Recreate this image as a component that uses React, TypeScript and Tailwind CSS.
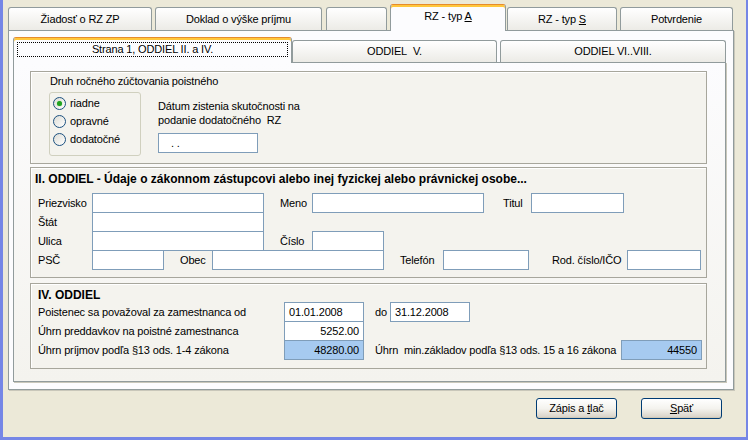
import React from 'react';

const font = "font-['Liberation_Sans',Arial,sans-serif] tracking-[-0.15px]";

const OuterTab: React.FC<{ label: React.ReactNode; className: string; active?: boolean }> = ({ label, className, active }) => (
  <div
    className={`${className} flex items-center justify-center rounded-t-[3px] border border-[#919b9c] text-[11px] leading-[13px] text-black ${
      active
        ? 'relative z-10 -mb-px h-[27px] border-b-0 border-t-[#e68b2c] bg-[#fcfcfe] pb-[3px] shadow-[inset_0_2px_0_#ffc73c]'
        : 'h-[23px] border-b-0 bg-gradient-to-b from-white to-[#ecebe6] pt-[1px]'
    }`}
  >
    {label}
  </div>
);

const Input: React.FC<{ className?: string; text?: string; right?: boolean; blue?: boolean }> = ({ className = '', text, right, blue }) => (
  <div
    className={`${className} flex h-[20px] shrink-0 items-center border border-[#7f9db9] px-[4px] text-[11px] leading-[13px] ${
      blue ? 'bg-[#a6caf0]' : 'bg-white'
    } ${right ? 'justify-end' : ''}`}
  >
    {text}
  </div>
);

const Label: React.FC<{ className: string; children: React.ReactNode }> = ({ className, children }) => (
  <div className={`${className} shrink-0 text-[11px] leading-[13px] whitespace-nowrap`}>{children}</div>
);

const Radio: React.FC<{ label: string; checked?: boolean }> = ({ label, checked }) => (
  <div className="flex h-[18px] items-center pt-[3px]">
    <div className="ml-[3px] flex h-[13px] w-[13px] items-center justify-center rounded-full border border-[#1c5180] bg-gradient-to-br from-[#dcdcd6] to-white">
      {checked && <div className="h-[5px] w-[5px] rounded-full bg-[#21a121] shadow-[0_0_1px_#5fd35f]" />}
    </div>
    <span className="ml-[4px] text-[11px] leading-[13px]">{label}</span>
  </div>
);

const Button: React.FC<{ children: React.ReactNode; className?: string }> = ({ children, className = '' }) => (
  <div
    className={`${className} flex h-[21px] w-[81px] items-center justify-center rounded-[3px] border border-[#003c74] bg-gradient-to-b from-white via-[#f4f3ee] to-[#d6d0c5] text-[11px] leading-[13px] shadow-[inset_0_-1px_0_#d0c9b8]`}
  >
    {children}
  </div>
);

export default function App() {
  return (
    <div className={`${font} flex h-[440px] w-[748px] flex-col border-b-[3px] border-l-[3px] border-r-[2px] border-[#7586e6] bg-[#ece9d8] text-black`}>
      {/* outer tabs */}
      <div className="flex h-[30px] items-end pl-[5px] pt-[4px]">
        <OuterTab className="w-[144px]" label="Žiadosť o RZ ZP" />
        <OuterTab className="ml-[3px] w-[167px]" label="Doklad o výške príjmu" />
        <OuterTab className="ml-[4px] w-[61px]" label="" />
        <OuterTab
          className="ml-[3px] w-[116px]"
          active
          label={
            <span>
              RZ - typ <span className="underline">A</span>
            </span>
          }
        />
        <OuterTab
          className="ml-[1px] w-[110px]"
          label={
            <span>
              RZ - typ <span className="underline">S</span>
            </span>
          }
        />
        <OuterTab className="ml-[3px] w-[113px]" label="Potvrdenie" />
      </div>

      {/* outer panel */}
      <div className="ml-[5px] flex h-[360px] w-[726px] flex-col border border-[#919b9c] bg-[#fcfcfe] pl-[4px] pt-[6px] shadow-[1px_1px_0_#c9c7ba]">
        {/* inner tabs */}
        <div className="flex h-[25px] items-end">
          <div className="relative z-10 -mb-px flex h-[26px] w-[279px] items-start rounded-t-[3px] border border-b-0 border-[#919b9c] border-t-[#e68b2c] bg-[#fcfcfe] px-[3px] pt-[4px] shadow-[inset_0_2px_0_#ffc73c]">
            <div className="flex h-[15px] w-full items-center justify-center border border-dotted border-black text-[11px] leading-[13px]">
              Strana 1, ODDIEL II. a IV.
            </div>
          </div>
          <div className="flex h-[22px] w-[205px] items-center justify-center rounded-t-[3px] border border-b-0 border-[#919b9c] bg-gradient-to-b from-white to-[#ecebe6] text-[11px] leading-[13px]">
            ODDIEL&nbsp;&nbsp;V.
          </div>
          <div className="ml-[3px] flex h-[22px] w-[226px] items-center justify-center rounded-t-[3px] border border-b-0 border-[#919b9c] bg-gradient-to-b from-white to-[#ecebe6] text-[11px] leading-[13px]">
            ODDIEL VI..VIII.
          </div>
        </div>

        {/* inner panel */}
        <div className="flex h-[320px] w-[713px] flex-col border border-[#919b9c] bg-gradient-to-b from-[#fcfcfe] to-[#f4f3ee] pl-[16px] pt-[8px] shadow-[1px_1px_0_#c9c7ba]">
          {/* Druh */}
          <div className="flex h-[93px] w-[677px] flex-col border border-[#a7a69c] bg-[#f4f3ee] pl-[19px] pt-[3px] shadow-[inset_1px_1px_0_#fff]">
            <Label className="">Druh ročného zúčtovania poistného</Label>
            <div className="mt-[4px] flex">
              <div className="-ml-px flex h-[64px] w-[92px] flex-col rounded-[3px] border border-[#d0d0bf]">
                <Radio label="riadne" checked />
                <Radio label="opravné" />
                <Radio label="dodatočné" />
              </div>
              <div className="ml-[17px] flex flex-col pt-[7px]">
                <div className="text-[11px] leading-[14px]">Dátum zistenia skutočnosti na</div>
                <div className="text-[11px] leading-[14px]">podanie dodatočného&nbsp; RZ</div>
                <Input className="mt-[6px] w-[100px] pl-[12px]" text=".  ." />
              </div>
            </div>
          </div>

          {/* II. ODDIEL */}
          <div className="mt-[3px] flex h-[111px] w-[677px] flex-col border border-[#a7a69c] bg-[#f4f3ee] shadow-[inset_1px_1px_0_#fff]">
            <div className="pl-[4px] pt-[5px] text-[12px] font-bold leading-[13px] tracking-[0px] whitespace-nowrap">
              II. ODDIEL - Údaje o zákonnom zástupcovi alebo inej fyzickej alebo právnickej osobe...
            </div>
            <div className="mt-[7px] flex flex-col pl-[7px]">
              <div className="flex items-center">
                <Label className="w-[54px]">Priezvisko</Label>
                <Input className="w-[172px]" />
                <Label className="ml-[16px] w-[32px]">Meno</Label>
                <Input className="w-[172px]" />
                <Label className="ml-[19px] w-[28px]">Titul</Label>
                <Input className="w-[93px]" />
              </div>
              <div className="-mt-px flex items-center">
                <Label className="w-[54px]">Štát</Label>
                <Input className="w-[172px]" />
              </div>
              <div className="-mt-px flex items-center">
                <Label className="w-[54px]">Ulica</Label>
                <Input className="w-[172px]" />
                <Label className="ml-[16px] w-[32px]">Číslo</Label>
                <Input className="w-[72px]" />
              </div>
              <div className="-mt-px flex items-center">
                <Label className="w-[54px]">PSČ</Label>
                <Input className="w-[72px]" />
                <Label className="ml-[16px] w-[32px]">Obec</Label>
                <Input className="w-[172px]" />
                <Label className="ml-[16px] w-[43px]">Telefón</Label>
                <Input className="w-[86px]" />
                <Label className="ml-[23px] w-[75px]">Rod. číslo/IČO</Label>
                <Input className="w-[74px]" />
              </div>
            </div>
          </div>

          {/* IV. ODDIEL */}
          <div className="mt-[5px] flex h-[86px] w-[677px] flex-col border border-[#a7a69c] bg-[#f4f3ee] pl-[7px] shadow-[inset_1px_1px_0_#fff]">
            <div className="pt-[5px] text-[12px] font-bold leading-[13px] tracking-[0px]">IV. ODDIEL</div>
            <div className="flex items-center">
              <Label className="w-[246px]">Poistenec sa považoval za zamestnanca od</Label>
              <Input className="w-[80px]" text="01.01.2008" />
              <Label className="ml-[11px] w-[15px]">do</Label>
              <Input className="w-[80px]" text="31.12.2008" />
            </div>
            <div className="-mt-px flex items-center">
              <Label className="w-[246px]">Úhrn preddavkov na poistné zamestnanca</Label>
              <Input className="w-[80px]" text="5252.00" right />
            </div>
            <div className="-mt-px flex items-center">
              <Label className="w-[246px]">Úhrn príjmov podľa §13 ods. 1-4 zákona</Label>
              <Input className="w-[80px]" text="48280.00" right blue />
              <Label className="ml-[11px] w-[246px]">Úhrn&nbsp; min.základov podľa §13 ods. 15 a 16 zákona</Label>
              <Input className="w-[81px]" text="44550" right blue />
            </div>
          </div>
        </div>
      </div>

      {/* buttons */}
      <div className="mt-[8px] flex justify-end pr-[24px]">
        <Button>
          <span>
            Zápis a <span className="underline">t</span>lač
          </span>
        </Button>
        <Button className="ml-[24px]">
          <span>
            <span className="underline">S</span>päť
          </span>
        </Button>
      </div>
    </div>
  );
}
